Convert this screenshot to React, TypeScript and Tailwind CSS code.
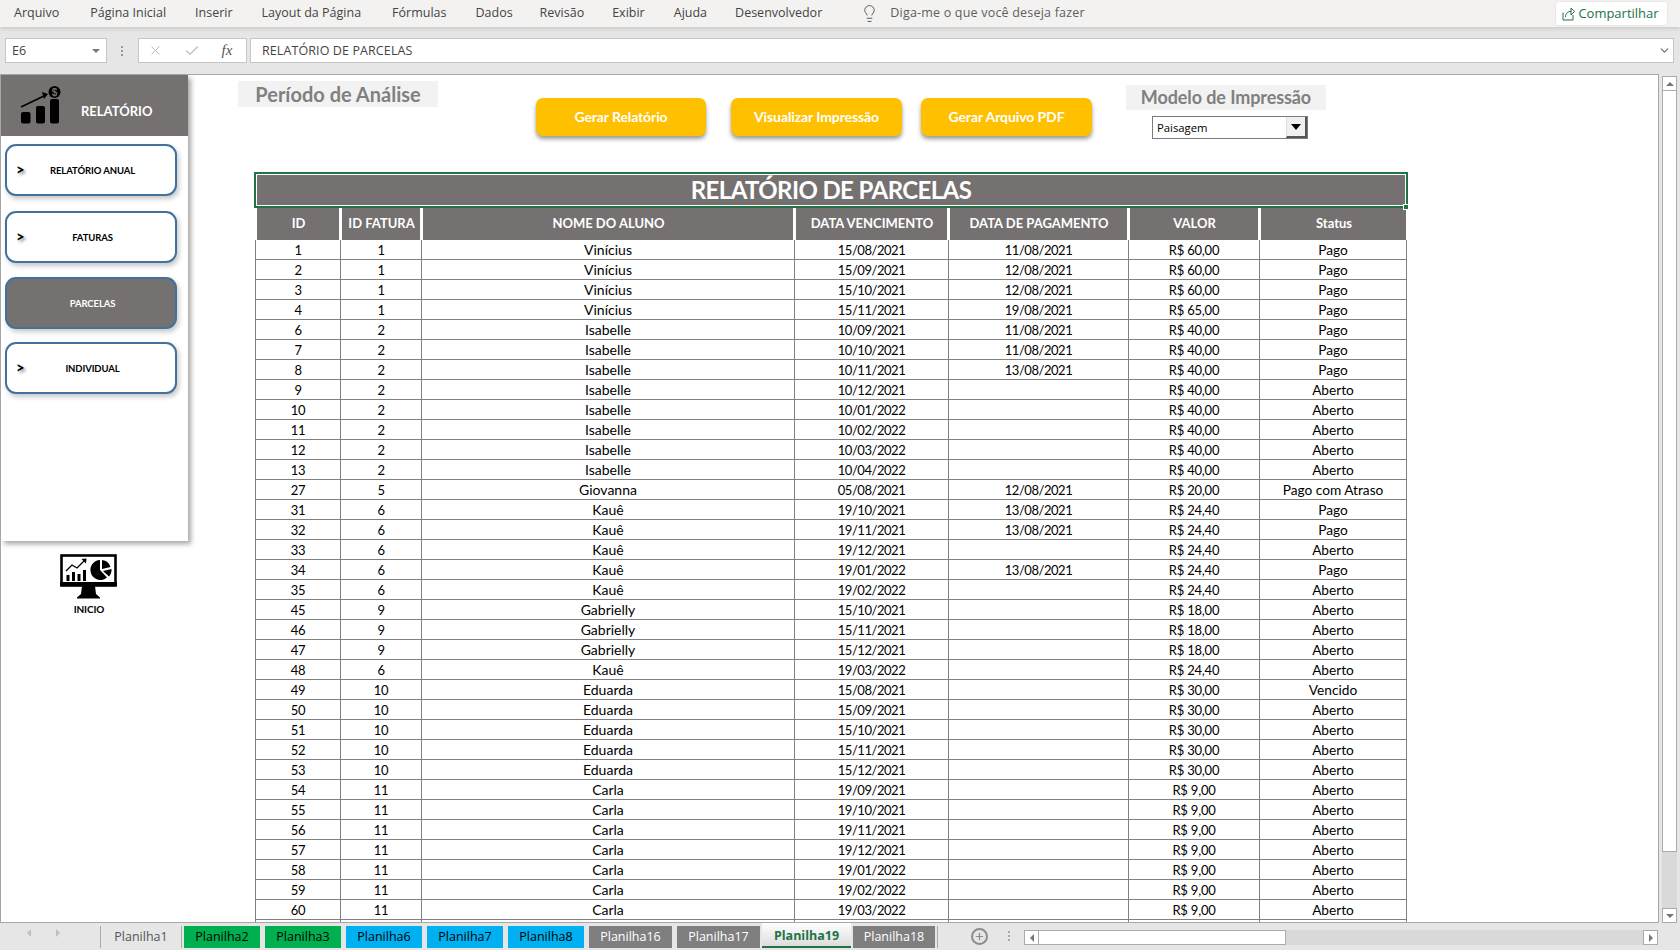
import React from "react";
import { Lightbulb, X, Check, ChevronDown, Plus } from "lucide-react";

const COLS = "grid grid-cols-[85px_81px_373px_154px_180px_131px_147px]";

type R = [number, number, string, string, string, string, string];
const rows: R[] = [
  [1, 1, "Vinícius", "15/08/2021", "11/08/2021", "R$ 60,00", "Pago"],
  [2, 1, "Vinícius", "15/09/2021", "12/08/2021", "R$ 60,00", "Pago"],
  [3, 1, "Vinícius", "15/10/2021", "12/08/2021", "R$ 60,00", "Pago"],
  [4, 1, "Vinícius", "15/11/2021", "19/08/2021", "R$ 65,00", "Pago"],
  [6, 2, "Isabelle", "10/09/2021", "11/08/2021", "R$ 40,00", "Pago"],
  [7, 2, "Isabelle", "10/10/2021", "11/08/2021", "R$ 40,00", "Pago"],
  [8, 2, "Isabelle", "10/11/2021", "13/08/2021", "R$ 40,00", "Pago"],
  [9, 2, "Isabelle", "10/12/2021", "", "R$ 40,00", "Aberto"],
  [10, 2, "Isabelle", "10/01/2022", "", "R$ 40,00", "Aberto"],
  [11, 2, "Isabelle", "10/02/2022", "", "R$ 40,00", "Aberto"],
  [12, 2, "Isabelle", "10/03/2022", "", "R$ 40,00", "Aberto"],
  [13, 2, "Isabelle", "10/04/2022", "", "R$ 40,00", "Aberto"],
  [27, 5, "Giovanna", "05/08/2021", "12/08/2021", "R$ 20,00", "Pago com Atraso"],
  [31, 6, "Kauê", "19/10/2021", "13/08/2021", "R$ 24,40", "Pago"],
  [32, 6, "Kauê", "19/11/2021", "13/08/2021", "R$ 24,40", "Pago"],
  [33, 6, "Kauê", "19/12/2021", "", "R$ 24,40", "Aberto"],
  [34, 6, "Kauê", "19/01/2022", "13/08/2021", "R$ 24,40", "Pago"],
  [35, 6, "Kauê", "19/02/2022", "", "R$ 24,40", "Aberto"],
  [45, 9, "Gabrielly", "15/10/2021", "", "R$ 18,00", "Aberto"],
  [46, 9, "Gabrielly", "15/11/2021", "", "R$ 18,00", "Aberto"],
  [47, 9, "Gabrielly", "15/12/2021", "", "R$ 18,00", "Aberto"],
  [48, 6, "Kauê", "19/03/2022", "", "R$ 24,40", "Aberto"],
  [49, 10, "Eduarda", "15/08/2021", "", "R$ 30,00", "Vencido"],
  [50, 10, "Eduarda", "15/09/2021", "", "R$ 30,00", "Aberto"],
  [51, 10, "Eduarda", "15/10/2021", "", "R$ 30,00", "Aberto"],
  [52, 10, "Eduarda", "15/11/2021", "", "R$ 30,00", "Aberto"],
  [53, 10, "Eduarda", "15/12/2021", "", "R$ 30,00", "Aberto"],
  [54, 11, "Carla", "19/09/2021", "", "R$ 9,00", "Aberto"],
  [55, 11, "Carla", "19/10/2021", "", "R$ 9,00", "Aberto"],
  [56, 11, "Carla", "19/11/2021", "", "R$ 9,00", "Aberto"],
  [57, 11, "Carla", "19/12/2021", "", "R$ 9,00", "Aberto"],
  [58, 11, "Carla", "19/01/2022", "", "R$ 9,00", "Aberto"],
  [59, 11, "Carla", "19/02/2022", "", "R$ 9,00", "Aberto"],
  [60, 11, "Carla", "19/03/2022", "", "R$ 9,00", "Aberto"],
];

const headers = ["ID", "ID FATURA", "NOME DO ALUNO", "DATA VENCIMENTO", "DATA DE PAGAMENTO", "VALOR", "Status"];

const cellText = [
  "text-[13px] leading-[17px] tracking-[-0.4px]",
  "text-[13px] leading-[17px] tracking-[-0.4px]",
  "text-[14px] leading-[16px]",
  "text-[13px] leading-[17px] tracking-[-0.45px]",
  "text-[13px] leading-[17px] tracking-[-0.45px]",
  "text-[13px] leading-[17px] tracking-[-0.2px]",
  "text-[13.7px] leading-[16px]",
];

const menu: [string, string][] = [
  ["Arquivo", "ml-[14px]"],
  ["Página Inicial", "ml-[31px]"],
  ["Inserir", "ml-[29px]"],
  ["Layout da Página", "ml-[29px]"],
  ["Fórmulas", "ml-[31px]"],
  ["Dados", "ml-[29px]"],
  ["Revisão", "ml-[27px]"],
  ["Exibir", "ml-[28px]"],
  ["Ajuda", "ml-[29px]"],
  ["Desenvolvedor", "ml-[28px]"],
];

function ChartLogo() {
  return (
    <svg width="42" height="40" viewBox="0 0 42 40" className="ml-[19px] mt-[10px] shrink-0">
      <rect x="1" y="27" width="9.5" height="11.5" rx="2" fill="#000" />
      <rect x="16" y="21" width="9" height="17.5" rx="2" fill="#000" />
      <rect x="30" y="14" width="9" height="24.5" rx="2" fill="#000" />
      <path d="M1 22 L26 10" stroke="#000" strokeWidth="1.5" />
      <path d="M22 7 L28 9 L24 14 Z" fill="#000" />
      <circle cx="34.5" cy="7" r="6" fill="#000" />
      <text x="34.5" y="10.5" textAnchor="middle" fontSize="10" fontWeight="700" fill="#767171" fontFamily="Liberation Sans, sans-serif">$</text>
    </svg>
  );
}

function MonitorLogo() {
  return (
    <svg width="58" height="45" viewBox="0 0 58 45">
      <rect x="1.5" y="1.5" width="54" height="30" fill="#fff" stroke="#000" strokeWidth="2.6" />
      <rect x="0" y="28" width="57" height="4" fill="#000" />
      <path d="M22 32 H35 L36 40 L40 43.5 V44.5 H17 V43.5 L21 40 Z" fill="#000" />
      <rect x="6.5" y="21" width="3" height="6" fill="#000" />
      <rect x="12" y="18" width="3" height="9" fill="#000" />
      <rect x="17.5" y="20" width="3" height="7" fill="#000" />
      <rect x="23" y="16" width="3" height="11" fill="#000" />
      <path d="M6 17 L12 11 L17 14 L25 6" stroke="#000" strokeWidth="1.3" fill="none" />
      <path d="M21.5 5 L26.5 4.5 L26 9.5 Z" fill="#000" />
      <path d="M40 6 V16 L47 23.5 A10 10 0 1 1 40 6 Z" fill="#000" />
      <path d="M42 6 A10 10 0 0 1 50.5 13 L42 15 Z" fill="#000" />
      <path d="M43 17 L51.5 15 A10 10 0 0 1 49 22.5 Z" fill="#000" />
    </svg>
  );
}

function SideButton({ label, active }: { label: string; active?: boolean }) {
  return (
    <div
      className={
        "relative ml-[4px] flex h-[52px] w-[172px] items-center justify-center rounded-[11px] border-2 border-[#41719c] shadow-[2px_3px_5px_rgba(0,0,0,0.22)] " +
        (active ? "bg-[#767171] text-white" : "bg-white text-black")
      }
    >
      {!active && (
        <span className="absolute left-[9px] top-[12px] text-[15px] font-bold [text-shadow:2px_2px_3px_rgba(0,0,0,0.45)]">&gt;</span>
      )}
      <span className="ml-[3px] mt-[3px] text-[9.5px] font-bold tracking-[-0.1px]">{label}</span>
    </div>
  );
}

function YellowButton({ label, className }: { label: string; className: string }) {
  return (
    <div
      className={
        "mt-[23px] flex h-[38px] items-center justify-center rounded-[7px] bg-[#ffc000] pb-[2px] text-[14px] font-bold tracking-[-0.1px] text-white shadow-[0_3px_4px_rgba(0,0,0,0.4)] " +
        className
      }
    >
      {label}
    </div>
  );
}

function Tab({ label, className }: { label: string; className: string }) {
  return (
    <div className={"flex h-[22px] items-center justify-center font-['Open_Sans',sans-serif] text-[12.5px] " + className}>{label}</div>
  );
}

export default function App() {
  return (
    <div className="flex h-[950px] w-[1680px] flex-col overflow-hidden bg-[#e6e6e6] font-['Lato',sans-serif] text-black">
      {/* ribbon */}
      <div className="relative z-10 flex h-[27px] shrink-0 items-center bg-[#f3f2f1] font-['Open_Sans',sans-serif] text-[12.5px] text-[#444444] shadow-[0_2px_4px_rgba(0,0,0,0.12)]">
        {menu.map(([m, c]) => (
          <span key={m} className={c}>{m}</span>
        ))}
        <Lightbulb size={19} strokeWidth={1.2} className="ml-[38px] text-[#555555]" />
        <span className="ml-[11px] text-[#5e5e5e] tracking-[0.2px]">Diga-me o que você deseja fazer</span>
        <div className="ml-auto mr-[13px] flex h-[23px] w-[111px] items-center justify-center gap-[3px] rounded-[2px] bg-white pr-[2px] text-[13px] text-[#217346] shadow-[0_0_2px_rgba(0,0,0,0.15)]">
          <svg width="13" height="14" viewBox="0 0 13 14" fill="none" stroke="#217346" strokeWidth="1">
            <path d="M1 5.5 V13 H11 V8" />
            <path d="M3.5 10 C3.5 6 6 4.5 9 4.5 M9 1 L12.5 4.5 L9 8 Z" />
          </svg>
          <span>Compartilhar</span>
        </div>
      </div>

      {/* formula bar */}
      <div className="flex h-[47px] shrink-0 items-start pt-[11px] font-['Open_Sans',sans-serif] text-[12.5px] text-[#444444]">
        <div className="ml-[5px] flex h-[25px] w-[102px] items-center justify-between border border-[#c6c6c6] bg-white pl-[6px] pr-[6px]">
          <span className="mt-[2px]">E6</span>
          <span className="h-0 w-0 border-x-[4px] border-t-[4px] border-x-transparent border-t-[#777777]" />
        </div>
        <div className="flex h-[25px] w-[30.5px] flex-col items-center justify-center gap-[2px]">
          <span className="h-[2px] w-[2px] bg-[#999999]" />
          <span className="h-[2px] w-[2px] bg-[#999999]" />
          <span className="h-[2px] w-[2px] bg-[#999999]" />
        </div>
        <div className="flex h-[25px] w-[109.5px] items-center border border-[#c6c6c6] bg-white pl-[9px]">
          <X size={15} strokeWidth={1.6} className="text-[#bdbdbd]" />
          <Check size={16} strokeWidth={2.2} className="ml-[21px] text-[#c4c4c4]" />
          <span className="ml-[22px] font-['Liberation_Serif',serif] text-[15px] italic text-[#555555]">fx</span>
        </div>
        <div className="ml-[3px] flex h-[25px] w-[1424px] items-center justify-between border border-[#c6c6c6] bg-white pl-[11px] pr-[2px]">
          <span className="mt-[2px] tracking-[0.1px]">RELATÓRIO DE PARCELAS</span>
          <ChevronDown size={13} strokeWidth={2.4} className="text-[#777777]" />
        </div>
      </div>

      {/* sheet + vertical scrollbar */}
      <div className="flex h-[849px] shrink-0">
        <div className="flex h-full w-[1659px] overflow-hidden border border-[#a6a6a6] bg-white">
          {/* left column */}
          <div className="w-[237px] shrink-0">
            <div className="flex h-[466px] w-[187px] flex-col bg-white shadow-[3px_3px_5px_rgba(0,0,0,0.35)]">
              <div className="flex h-[61px] items-start bg-[#767171]">
                <ChartLogo />
                <span className="ml-[19px] mt-[27px] text-[13px] font-bold text-white">RELATÓRIO</span>
              </div>
              <div className="flex flex-col pt-[8px]">
                <SideButton label="RELATÓRIO ANUAL" />
                <div className="h-[15px]" />
                <SideButton label="FATURAS" />
                <div className="h-[14px]" />
                <SideButton label="PARCELAS" active />
                <div className="h-[13px]" />
                <SideButton label="INDIVIDUAL" />
              </div>
            </div>
            <div className="ml-[59px] mt-[13px] flex w-[58px] flex-col items-center">
              <MonitorLogo />
              <span className="mt-[3px] text-[10px] font-bold tracking-[-0.1px]">INICIO</span>
            </div>
          </div>

          {/* right column */}
          <div className="flex-1">
            <div className="flex h-[97px] items-start">
              <div className="mt-[6px] flex h-[26px] w-[200px] items-center justify-center bg-[#f2f2f2] text-[20px] font-bold text-[#808080]">Período de Análise</div>
              <YellowButton label="Gerar Relatório" className="ml-[98px] w-[170px]" />
              <YellowButton label="Visualizar Impressão" className="ml-[25px] w-[171px]" />
              <YellowButton label="Gerar Arquivo PDF" className="ml-[19px] w-[171px]" />
              <div className="ml-[34px] w-[200px]">
                <div className="mt-[10px] flex h-[25px] items-center justify-center bg-[#f2f2f2] text-[18px] font-bold tracking-[-0.1px] text-[#808080]">Modelo de Impressão</div>
                <div className="ml-[26px] mt-[6px] flex h-[23px] w-[156px] items-center justify-between border border-[#7a7a85] bg-white pl-[4px] font-['Open_Sans',sans-serif] text-[11.3px]">
                  <span className="mt-[2px]">Paisagem</span>
                  <span className="flex h-full w-[21px] items-center justify-center border-b-2 border-l border-r-2 border-b-[#555555] border-l-[#dddddd] border-r-[#555555] bg-[#f0f0f0]">
                    <span className="h-0 w-0 border-x-[5.5px] border-t-[6px] border-x-transparent border-t-black" />
                  </span>
                </div>
              </div>
            </div>

            {/* title */}
            <div className="relative ml-[16px] h-[36px] w-[1154px] border-2 border-[#217346]">
              <div className="flex h-full items-center justify-center border border-white bg-[#767171] text-[24px] font-bold tracking-[-0.6px] text-white">RELATÓRIO DE PARCELAS</div>
              <span className="absolute bottom-[-4px] right-[-3px] h-[6px] w-[6px] border border-white bg-[#217346]" />
            </div>

            {/* table */}
            <div className="ml-[17px] w-[1152px]">
              <div className={COLS + " h-[32px]"}>
                {headers.map((h, i) => (
                  <div
                    key={h}
                    className={
                      "flex items-center justify-center bg-[#767171] pl-[1px] text-[13px] font-bold text-white " +
                      (i === 6 ? "ml-[2px]" : "ml-[2px] mr-[1px]")
                    }
                  >
                    {h}
                  </div>
                ))}
              </div>
              {rows.map((r) => (
                <div key={r[0]} className={COLS + " h-[20px] border-b border-l border-[#808080]"}>
                  {r.map((c, i) => (
                    <div key={i} className={"border-r border-[#808080] pt-[2px] text-center " + cellText[i]}>{c}</div>
                  ))}
                </div>
              ))}
              <div className={COLS + " h-[4px] border-l border-[#808080]"}>
                {headers.map((h) => (
                  <div key={h} className="border-r border-[#808080]" />
                ))}
              </div>
            </div>
          </div>
        </div>

        {/* vertical scrollbar */}
        <div className="ml-[3px] mt-[2px] flex h-[847px] w-[15px] flex-col bg-[#d9d9d9]">
          <div className="flex h-[15px] items-center justify-center border border-[#ababab] bg-white">
            <span className="h-0 w-0 border-x-[4px] border-b-[4px] border-x-transparent border-b-[#777777]" />
          </div>
          <div className="h-[761px] border-x border-b border-[#ababab] bg-white" />
          <div className="mt-auto flex h-[15px] items-center justify-center border border-[#ababab] bg-white">
            <span className="h-0 w-0 border-x-[4px] border-t-[4px] border-x-transparent border-t-[#777777]" />
          </div>
        </div>
      </div>

      {/* bottom tabs */}
      <div className="flex h-[27px] shrink-0 items-start">
        <div className="flex w-[100px] items-center pt-[6px]">
          <span className="ml-[27px] h-0 w-0 border-y-[4px] border-r-[4px] border-y-transparent border-r-[#c0c0c0]" />
          <span className="ml-[25px] h-0 w-0 border-y-[4px] border-l-[4px] border-y-transparent border-l-[#c0c0c0]" />
        </div>
        <div className="mt-[3px] flex items-start gap-[5px]">
          <Tab label="Planilha1" className="w-[82px] border-x border-[#ababab] text-[#555555]" />
          <Tab label="Planilha2" className="-ml-[3px] w-[76px] bg-[#00b050]" />
          <Tab label="Planilha3" className="w-[76px] bg-[#00b050]" />
          <Tab label="Planilha6" className="w-[76px] bg-[#00b0f0]" />
          <Tab label="Planilha7" className="w-[76px] bg-[#00b0f0]" />
          <Tab label="Planilha8" className="w-[76px] bg-[#00b0f0]" />
          <Tab label="Planilha16" className="w-[83px] bg-[#7f7f7f] text-white" />
          <Tab label="Planilha17" className="w-[83px] bg-[#7f7f7f] text-white" />
          <div className="-ml-[3px] -mt-[3px] flex h-[25px] w-[89px] items-center justify-center border-b-2 border-b-[#217346] bg-gradient-to-b from-white to-[#dcdcdc] pt-[3px] font-['Open_Sans',sans-serif] text-[12.5px] font-bold text-[#217346]">Planilha19</div>
          <Tab label="Planilha18" className="-ml-[3px] w-[82px] bg-[#7f7f7f] text-white" />
        </div>
        <div className="ml-[2px] mt-[3px] h-[22px] border-l border-[#ababab]" />
        <div className="ml-[33px] mt-[5px] flex h-[17px] w-[17px] items-center justify-center rounded-full border-2 border-[#8c8c8c]">
          <Plus size={11} strokeWidth={2.6} className="text-[#8c8c8c]" />
        </div>
        <div className="ml-[20px] mt-[8px] flex flex-col gap-[2px]">
          <span className="h-[2px] w-[2px] bg-[#aaaaaa]" />
          <span className="h-[2px] w-[2px] bg-[#aaaaaa]" />
          <span className="h-[2px] w-[2px] bg-[#aaaaaa]" />
        </div>
        <div className="ml-[14px] mt-[7px] flex h-[15px] w-[634px] bg-[#d9d9d9]">
          <div className="flex w-[15px] items-center justify-center border border-[#ababab] bg-white">
            <span className="h-0 w-0 border-y-[4px] border-r-[4px] border-y-transparent border-r-[#777777]" />
          </div>
          <div className="w-[247px] border-y border-r border-[#ababab] bg-white" />
          <div className="ml-auto flex w-[15px] items-center justify-center border border-[#ababab] bg-white">
            <span className="h-0 w-0 border-y-[4px] border-l-[4px] border-y-transparent border-l-[#777777]" />
          </div>
        </div>
      </div>
    </div>
  );
}
